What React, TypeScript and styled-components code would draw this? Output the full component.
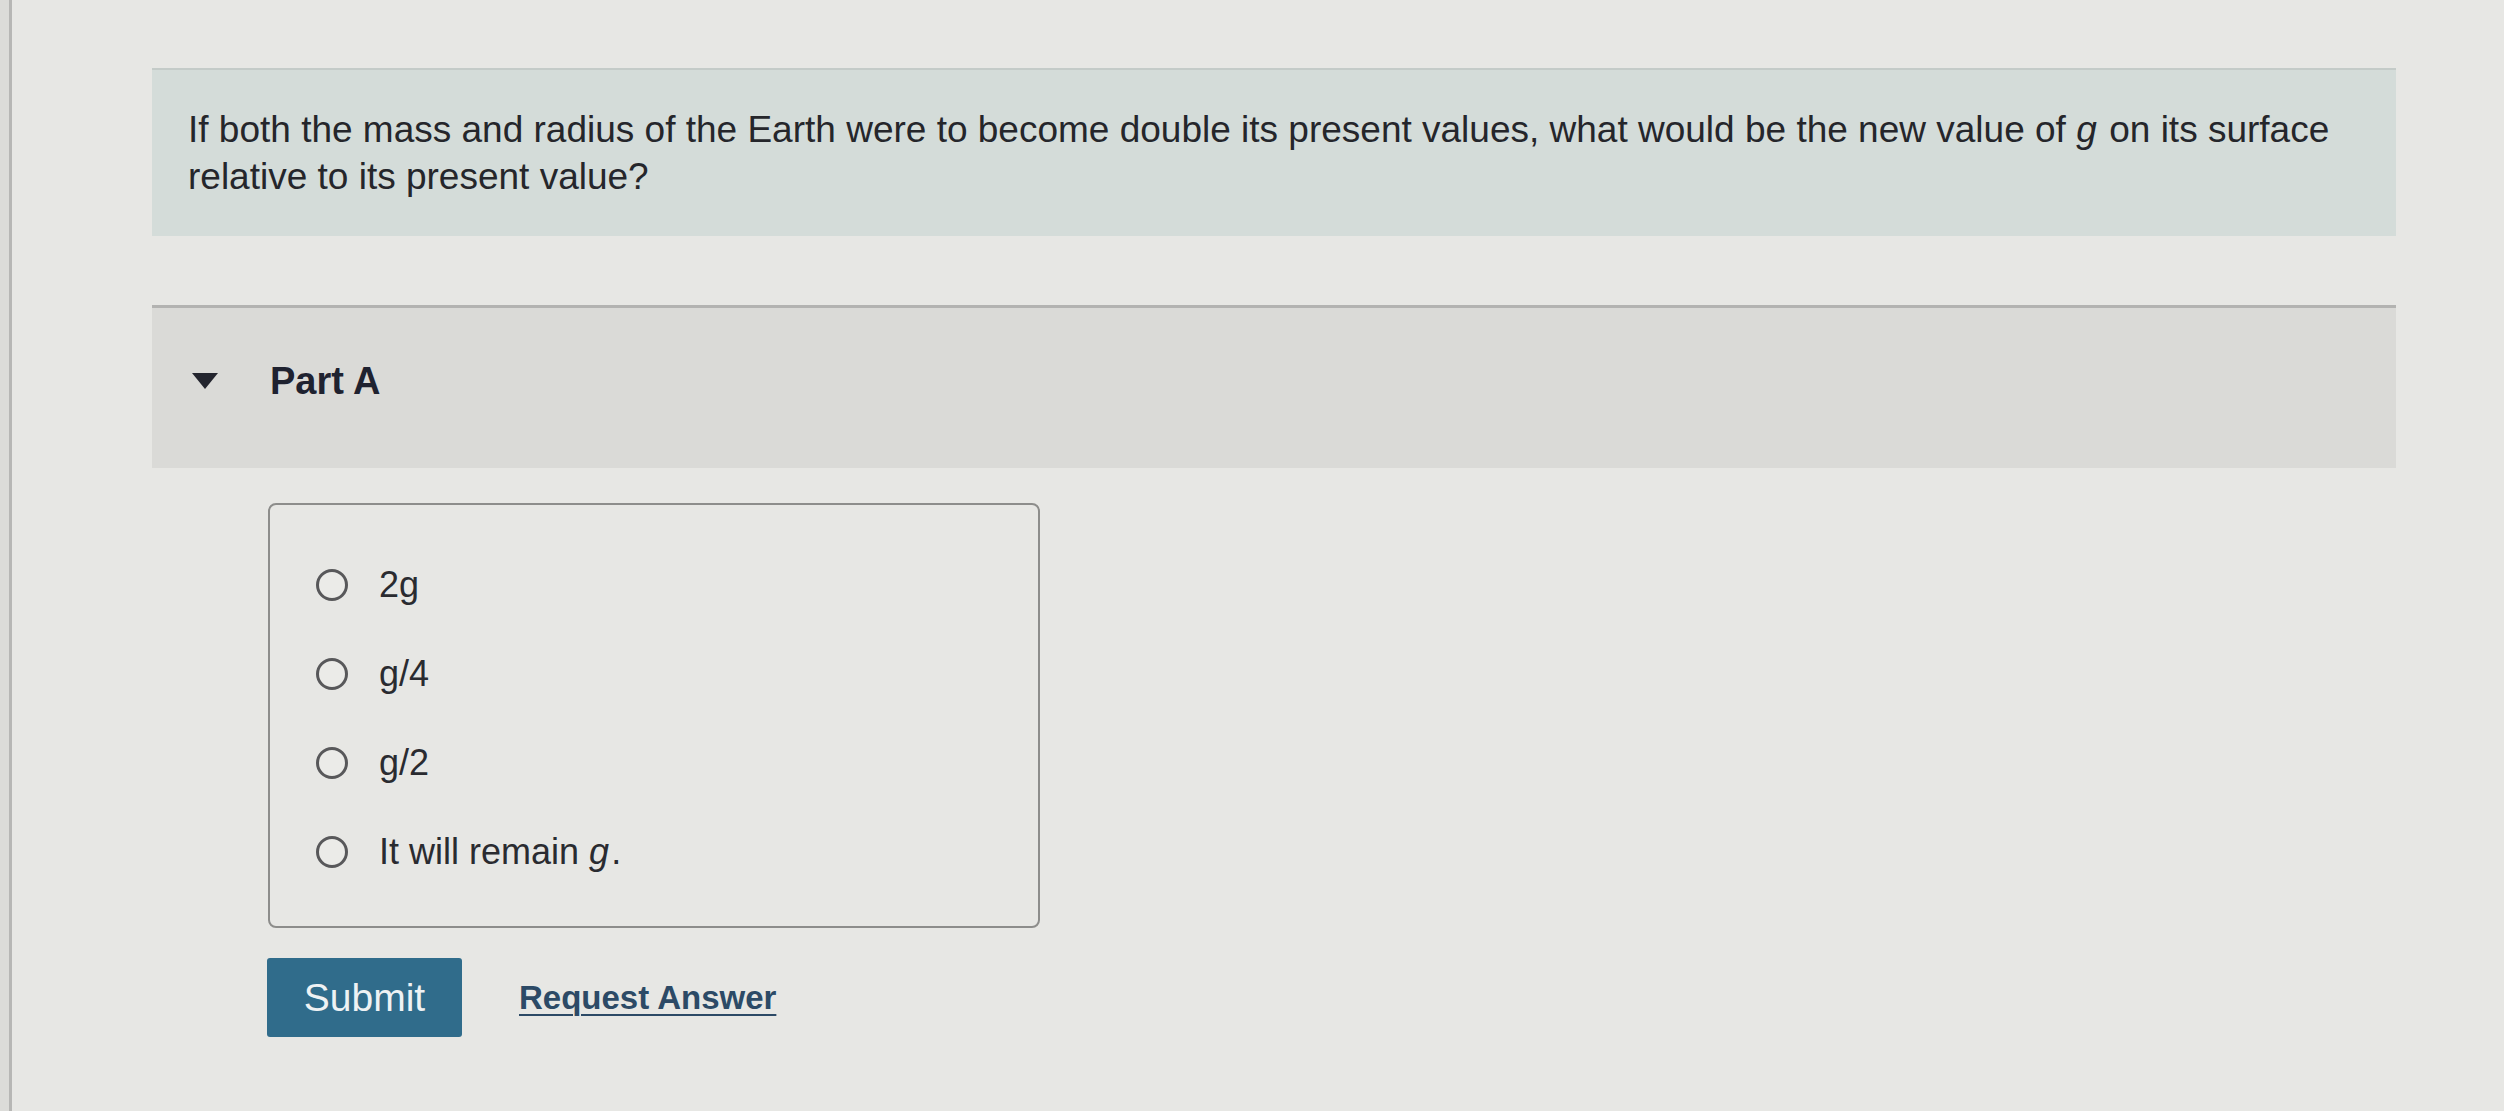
import * as React from 'react';
import styled, { createGlobalStyle } from 'styled-components';

const Var = styled.i`
  padding-right: 0.06em;
`;

const OPTIONS: React.ReactNode[] = [
  '2g',
  'g/4',
  'g/2',
  <>
    It will remain <Var>g</Var>.
  </>,
];

/// GLOBAL
/** ******************************************************************* */
const GlobalStyle = createGlobalStyle`
  html, body {
    margin: 0;
    padding: 0;
    background: #dcdcd9;
  }
  body {
    font-family: "Liberation Sans", Arial, Helvetica, sans-serif;
    color: #26272c;
  }
`;

/// LAYOUT
/** ******************************************************************* */
const Page = styled.div`
  min-height: 1111px;
  padding-left: 9px;
  box-sizing: border-box;
`;

const Main = styled.main`
  min-height: 1111px;
  box-sizing: border-box;
  background: #e7e7e4;
  border-left: 3px solid #b7b7b5;
  padding: 68px 108px 60px 140px;
  display: flex;
  flex-direction: column;
`;

/// QUESTION
/** ******************************************************************* */
const QuestionBox = styled.section`
  background: #d4dcd9;
  border-top: 2px solid #c4cbc8;
  padding: 36px 40px 36px 36px;
  font-size: 37px;
  line-height: 47px;
  color: #25262b;
`;

const QuestionLine = styled.span`
  display: block;
`;

/// PART HEADER
/** ******************************************************************* */
const PartHeader = styled.div`
  margin-top: 69px;
  height: 163px;
  box-sizing: border-box;
  background: #dadad7;
  border-top: 3px solid #b3b3b1;
  display: flex;
  align-items: center;
  gap: 52px;
  padding: 0 0 14px 40px;
`;

const Caret = styled.span`
  width: 0;
  height: 0;
  border-left: 13px solid transparent;
  border-right: 13px solid transparent;
  border-top: 16px solid #23252e;
`;

const PartTitle = styled.h2`
  margin: 0;
  font-size: 38px;
  line-height: 45px;
  font-weight: 700;
  color: #1f2230;
`;

/// ANSWER BOX
/** ******************************************************************* */
const AnswerBox = styled.fieldset`
  margin: 35px 0 0 116px;
  width: 772px;
  height: 425px;
  box-sizing: border-box;
  border: 2px solid #8d8d8b;
  border-radius: 8px;
  padding: 35px 0 0 46px;
  display: flex;
  flex-direction: column;
`;

const OptionRow = styled.label`
  height: 89px;
  display: flex;
  align-items: center;
  gap: 31px;
  font-size: 36px;
  color: #2a2b30;
  cursor: pointer;
`;

const Radio = styled.span`
  width: 32px;
  height: 32px;
  box-sizing: border-box;
  border-radius: 50%;
  border: 3px solid #58585a;
  background: #ebebe8;
  flex: none;
`;

/// ACTIONS
/** ******************************************************************* */
const Actions = styled.div`
  margin: 30px 0 0 115px;
  display: flex;
  align-items: center;
  gap: 57px;
`;

const SubmitButton = styled.button`
  width: 195px;
  height: 79px;
  border: none;
  border-radius: 3px;
  background: #306c8b;
  color: #eef2f4;
  font-family: inherit;
  font-size: 39px;
  cursor: pointer;
`;

const RequestLink = styled.a`
  font-size: 33px;
  font-weight: 700;
  color: #2c4a66;
  text-decoration: underline;
  text-underline-offset: 5px;
  text-decoration-thickness: 2px;
  cursor: pointer;
`;

export default function App() {
  return (
    <Page>
      <GlobalStyle />
      <Main>
        <QuestionBox>
          <QuestionLine>
            If both the mass and radius of the Earth were to become double its present values, what would be the new
            value of <Var>g</Var> on its surface
          </QuestionLine>
          <QuestionLine>relative to its present value?</QuestionLine>
        </QuestionBox>
        <PartHeader>
          <Caret />
          <PartTitle>Part A</PartTitle>
        </PartHeader>
        <AnswerBox>
          {OPTIONS.map((option, index) => (
            <OptionRow key={index}>
              <Radio />
              <span>{option}</span>
            </OptionRow>
          ))}
        </AnswerBox>
        <Actions>
          <SubmitButton>Submit</SubmitButton>
          <RequestLink>Request Answer</RequestLink>
        </Actions>
      </Main>
    </Page>
  );
}
